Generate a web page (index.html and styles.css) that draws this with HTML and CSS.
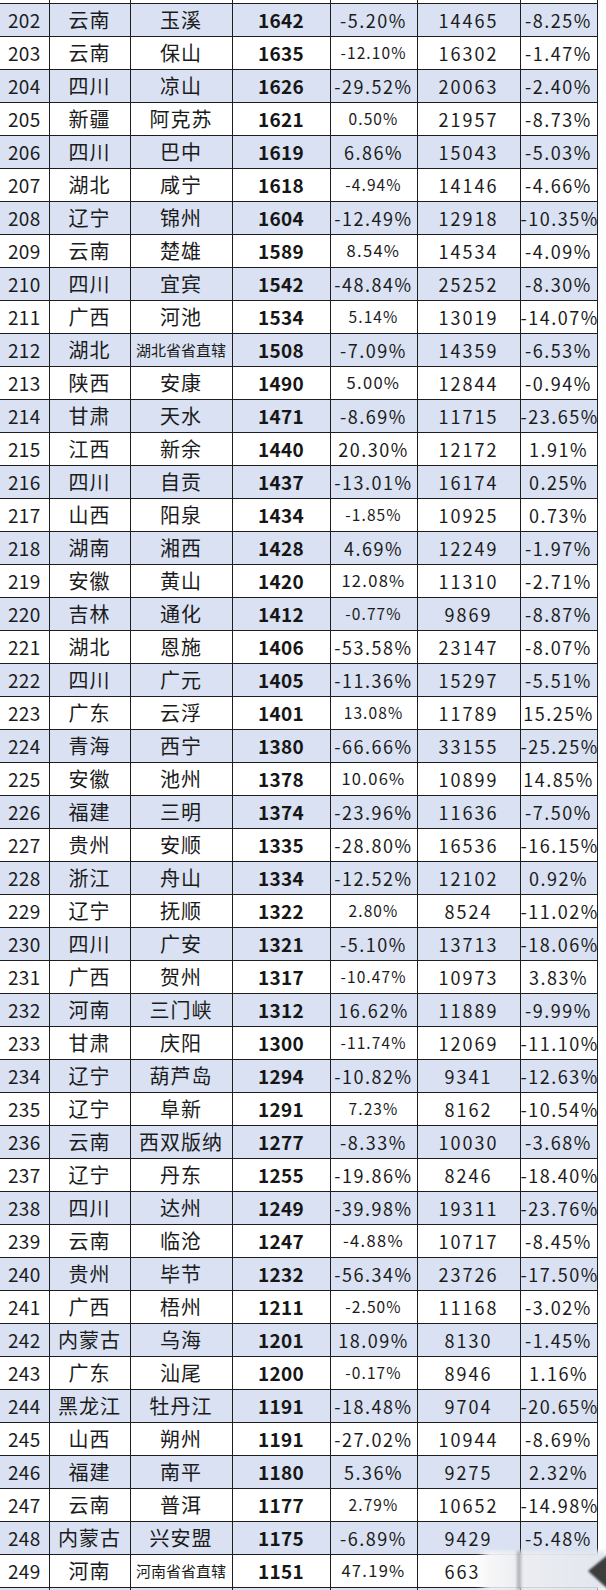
FILE: index.html
```html
<!DOCTYPE html>
<html lang="zh-CN">
<head>
<meta charset="utf-8">
<title>城市排名 202-249</title>
<link rel="stylesheet" href="styles.css">
</head>
<body>
<div class="page">
<table class="sheet">
<colgroup><col class="w1"><col class="w2"><col class="w3"><col class="w4"><col class="w5"><col class="w6"><col class="w7"></colgroup>
<tbody>
<tr class="edge-top"><td></td><td></td><td></td><td></td><td></td><td></td><td></td></tr>
<tr class="s"><td class="c1">202</td><td class="c2">云南</td><td class="c3">玉溪</td><td class="c4">1642</td><td class="c5">-5.20%</td><td class="c6">14465</td><td class="c7">-8.25%</td></tr>
<tr><td class="c1">203</td><td class="c2">云南</td><td class="c3">保山</td><td class="c4">1635</td><td class="c5 sm">-12.10%</td><td class="c6">16302</td><td class="c7">-1.47%</td></tr>
<tr class="s"><td class="c1">204</td><td class="c2">四川</td><td class="c3">凉山</td><td class="c4">1626</td><td class="c5">-29.52%</td><td class="c6">20063</td><td class="c7">-2.40%</td></tr>
<tr><td class="c1">205</td><td class="c2">新疆</td><td class="c3">阿克苏</td><td class="c4">1621</td><td class="c5 sm">0.50%</td><td class="c6">21957</td><td class="c7">-8.73%</td></tr>
<tr class="s"><td class="c1">206</td><td class="c2">四川</td><td class="c3">巴中</td><td class="c4">1619</td><td class="c5">6.86%</td><td class="c6">15043</td><td class="c7">-5.03%</td></tr>
<tr><td class="c1">207</td><td class="c2">湖北</td><td class="c3">咸宁</td><td class="c4">1618</td><td class="c5 sm">-4.94%</td><td class="c6">14146</td><td class="c7">-4.66%</td></tr>
<tr class="s"><td class="c1">208</td><td class="c2">辽宁</td><td class="c3">锦州</td><td class="c4">1604</td><td class="c5">-12.49%</td><td class="c6">12918</td><td class="c7">-10.35%</td></tr>
<tr><td class="c1">209</td><td class="c2">云南</td><td class="c3">楚雄</td><td class="c4">1589</td><td class="c5 md">8.54%</td><td class="c6">14534</td><td class="c7">-4.09%</td></tr>
<tr class="s"><td class="c1">210</td><td class="c2">四川</td><td class="c3">宜宾</td><td class="c4">1542</td><td class="c5">-48.84%</td><td class="c6">25252</td><td class="c7">-8.30%</td></tr>
<tr><td class="c1">211</td><td class="c2">广西</td><td class="c3">河池</td><td class="c4">1534</td><td class="c5 sm">5.14%</td><td class="c6">13019</td><td class="c7">-14.07%</td></tr>
<tr class="s"><td class="c1">212</td><td class="c2">湖北</td><td class="c3 tiny">湖北省省直辖</td><td class="c4">1508</td><td class="c5">-7.09%</td><td class="c6">14359</td><td class="c7">-6.53%</td></tr>
<tr><td class="c1">213</td><td class="c2">陕西</td><td class="c3">安康</td><td class="c4">1490</td><td class="c5 md">5.00%</td><td class="c6">12844</td><td class="c7">-0.94%</td></tr>
<tr class="s"><td class="c1">214</td><td class="c2">甘肃</td><td class="c3">天水</td><td class="c4">1471</td><td class="c5">-8.69%</td><td class="c6">11715</td><td class="c7">-23.65%</td></tr>
<tr><td class="c1">215</td><td class="c2">江西</td><td class="c3">新余</td><td class="c4">1440</td><td class="c5">20.30%</td><td class="c6">12172</td><td class="c7">1.91%</td></tr>
<tr class="s"><td class="c1">216</td><td class="c2">四川</td><td class="c3">自贡</td><td class="c4">1437</td><td class="c5">-13.01%</td><td class="c6">16174</td><td class="c7">0.25%</td></tr>
<tr><td class="c1">217</td><td class="c2">山西</td><td class="c3">阳泉</td><td class="c4">1434</td><td class="c5 sm">-1.85%</td><td class="c6">10925</td><td class="c7">0.73%</td></tr>
<tr class="s"><td class="c1">218</td><td class="c2">湖南</td><td class="c3">湘西</td><td class="c4">1428</td><td class="c5">4.69%</td><td class="c6">12249</td><td class="c7">-1.97%</td></tr>
<tr><td class="c1">219</td><td class="c2">安徽</td><td class="c3">黄山</td><td class="c4">1420</td><td class="c5 md">12.08%</td><td class="c6">11310</td><td class="c7">-2.71%</td></tr>
<tr class="s"><td class="c1">220</td><td class="c2">吉林</td><td class="c3">通化</td><td class="c4">1412</td><td class="c5 sm">-0.77%</td><td class="c6">9869</td><td class="c7">-8.87%</td></tr>
<tr><td class="c1">221</td><td class="c2">湖北</td><td class="c3">恩施</td><td class="c4">1406</td><td class="c5">-53.58%</td><td class="c6">23147</td><td class="c7">-8.07%</td></tr>
<tr class="s"><td class="c1">222</td><td class="c2">四川</td><td class="c3">广元</td><td class="c4">1405</td><td class="c5">-11.36%</td><td class="c6">15297</td><td class="c7">-5.51%</td></tr>
<tr><td class="c1">223</td><td class="c2">广东</td><td class="c3">云浮</td><td class="c4">1401</td><td class="c5 sm">13.08%</td><td class="c6">11789</td><td class="c7">15.25%</td></tr>
<tr class="s"><td class="c1">224</td><td class="c2">青海</td><td class="c3">西宁</td><td class="c4">1380</td><td class="c5">-66.66%</td><td class="c6">33155</td><td class="c7">-25.25%</td></tr>
<tr><td class="c1">225</td><td class="c2">安徽</td><td class="c3">池州</td><td class="c4">1378</td><td class="c5 md">10.06%</td><td class="c6">10899</td><td class="c7">14.85%</td></tr>
<tr class="s"><td class="c1">226</td><td class="c2">福建</td><td class="c3">三明</td><td class="c4">1374</td><td class="c5">-23.96%</td><td class="c6">11636</td><td class="c7">-7.50%</td></tr>
<tr><td class="c1">227</td><td class="c2">贵州</td><td class="c3">安顺</td><td class="c4">1335</td><td class="c5">-28.80%</td><td class="c6">16536</td><td class="c7">-16.15%</td></tr>
<tr class="s"><td class="c1">228</td><td class="c2">浙江</td><td class="c3">舟山</td><td class="c4">1334</td><td class="c5">-12.52%</td><td class="c6">12102</td><td class="c7">0.92%</td></tr>
<tr><td class="c1">229</td><td class="c2">辽宁</td><td class="c3">抚顺</td><td class="c4">1322</td><td class="c5 sm">2.80%</td><td class="c6">8524</td><td class="c7">-11.02%</td></tr>
<tr class="s"><td class="c1">230</td><td class="c2">四川</td><td class="c3">广安</td><td class="c4">1321</td><td class="c5">-5.10%</td><td class="c6">13713</td><td class="c7">-18.06%</td></tr>
<tr><td class="c1">231</td><td class="c2">广西</td><td class="c3">贺州</td><td class="c4">1317</td><td class="c5 sm">-10.47%</td><td class="c6">10973</td><td class="c7">3.83%</td></tr>
<tr class="s"><td class="c1">232</td><td class="c2">河南</td><td class="c3">三门峡</td><td class="c4">1312</td><td class="c5">16.62%</td><td class="c6">11889</td><td class="c7">-9.99%</td></tr>
<tr><td class="c1">233</td><td class="c2">甘肃</td><td class="c3">庆阳</td><td class="c4">1300</td><td class="c5 sm">-11.74%</td><td class="c6">12069</td><td class="c7">-11.10%</td></tr>
<tr class="s"><td class="c1">234</td><td class="c2">辽宁</td><td class="c3">葫芦岛</td><td class="c4">1294</td><td class="c5">-10.82%</td><td class="c6">9341</td><td class="c7">-12.63%</td></tr>
<tr><td class="c1">235</td><td class="c2">辽宁</td><td class="c3">阜新</td><td class="c4">1291</td><td class="c5 sm">7.23%</td><td class="c6">8162</td><td class="c7">-10.54%</td></tr>
<tr class="s"><td class="c1">236</td><td class="c2">云南</td><td class="c3">西双版纳</td><td class="c4">1277</td><td class="c5">-8.33%</td><td class="c6">10030</td><td class="c7">-3.68%</td></tr>
<tr><td class="c1">237</td><td class="c2">辽宁</td><td class="c3">丹东</td><td class="c4">1255</td><td class="c5">-19.86%</td><td class="c6">8246</td><td class="c7">-18.40%</td></tr>
<tr class="s"><td class="c1">238</td><td class="c2">四川</td><td class="c3">达州</td><td class="c4">1249</td><td class="c5">-39.98%</td><td class="c6">19311</td><td class="c7">-23.76%</td></tr>
<tr><td class="c1">239</td><td class="c2">云南</td><td class="c3">临沧</td><td class="c4">1247</td><td class="c5 md">-4.88%</td><td class="c6">10717</td><td class="c7">-8.45%</td></tr>
<tr class="s"><td class="c1">240</td><td class="c2">贵州</td><td class="c3">毕节</td><td class="c4">1232</td><td class="c5">-56.34%</td><td class="c6">23726</td><td class="c7">-17.50%</td></tr>
<tr><td class="c1">241</td><td class="c2">广西</td><td class="c3">梧州</td><td class="c4">1211</td><td class="c5 sm">-2.50%</td><td class="c6">11168</td><td class="c7">-3.02%</td></tr>
<tr class="s"><td class="c1">242</td><td class="c2">内蒙古</td><td class="c3">乌海</td><td class="c4">1201</td><td class="c5">18.09%</td><td class="c6">8130</td><td class="c7">-1.45%</td></tr>
<tr><td class="c1">243</td><td class="c2">广东</td><td class="c3">汕尾</td><td class="c4">1200</td><td class="c5 sm">-0.17%</td><td class="c6">8946</td><td class="c7">1.16%</td></tr>
<tr class="s"><td class="c1">244</td><td class="c2">黑龙江</td><td class="c3">牡丹江</td><td class="c4">1191</td><td class="c5">-18.48%</td><td class="c6">9704</td><td class="c7">-20.65%</td></tr>
<tr><td class="c1">245</td><td class="c2">山西</td><td class="c3">朔州</td><td class="c4">1191</td><td class="c5">-27.02%</td><td class="c6">10944</td><td class="c7">-8.69%</td></tr>
<tr class="s"><td class="c1">246</td><td class="c2">福建</td><td class="c3">南平</td><td class="c4">1180</td><td class="c5">5.36%</td><td class="c6">9275</td><td class="c7">2.32%</td></tr>
<tr><td class="c1">247</td><td class="c2">云南</td><td class="c3">普洱</td><td class="c4">1177</td><td class="c5 sm">2.79%</td><td class="c6">10652</td><td class="c7">-14.98%</td></tr>
<tr class="s"><td class="c1">248</td><td class="c2">内蒙古</td><td class="c3">兴安盟</td><td class="c4">1175</td><td class="c5">-6.89%</td><td class="c6">9429</td><td class="c7">-5.48%</td></tr>
<tr><td class="c1">249</td><td class="c2">河南</td><td class="c3 tiny">河南省省直辖</td><td class="c4">1151</td><td class="c5 md">47.19%</td><td class="c6 cut">663</td><td class="c7"></td></tr>
<tr class="s edge-bottom"><td></td><td></td><td></td><td></td><td></td><td></td><td></td></tr>
</tbody>
</table>
<div class="mark" aria-hidden="true">
  <div class="mark-fog"></div>
  <div class="mark-line"></div>
  <svg class="mark-logo" width="24" height="40" viewBox="0 0 24 40"><polygon points="24,2 24,40 2,20" fill="#3d3d3d"/></svg>
</div>
</div>
</body>
</html>
```
FILE: styles.css
```css
html, body {
  margin: 0;
  padding: 0;
  background: #ffffff;
}

body {
  width: 606px;
  height: 1590px;
  overflow: hidden;
}

.page {
  position: relative;
  width: 606px;
  height: 1590px;
  overflow: hidden;
  font-family: "Noto Sans CJK SC", "Noto Sans", sans-serif;
  color: #1b1b1b;
}

.sheet {
  border-collapse: collapse;
  table-layout: fixed;
  width: 597px;
}

.w1 { width: 49px; }
.w2 { width: 81px; }
.w3 { width: 102px; }
.w4 { width: 98px; }
.w5 { width: 87px; }
.w6 { width: 103px; }
.w7 { width: 77px; }

.sheet tr {
  height: 33px;
}

.sheet td {
  border: 1px solid #1e1e1e;
  padding: 0;
  text-align: center;
  vertical-align: middle;
  white-space: nowrap;
  overflow: visible;
  line-height: 1;
  background: #ffffff;
}

.sheet td:first-child {
  border-left: none;
}

.sheet tr.s td {
  background: #d9e1f2;
}

.sheet tr.edge-top {
  height: 3px;
}

.sheet tr.edge-top td {
  border-top: none;
}

.sheet tr.edge-bottom {
  height: 4px;
}

.sheet tr.edge-bottom td {
  border-bottom: none;
}

.c1 {
  font-size: 19px;
  letter-spacing: 0.3px;
}

.c2, .c3 {
  font-size: 20px;
  letter-spacing: 1px;
}

.c3.tiny {
  font-size: 15px;
  letter-spacing: 0;
}

.c4 {
  font-size: 19px;
  font-weight: 700;
  letter-spacing: 0.3px;
  color: #161616;
}

.c5 {
  font-size: 18px;
  letter-spacing: 1.5px;
}

.c5.md {
  font-size: 16.5px;
  letter-spacing: 1.3px;
}

.c5.sm {
  font-size: 15.5px;
  letter-spacing: 1.1px;
}

.c6 {
  font-size: 18px;
  letter-spacing: 2px;
}

.c6.cut {
  padding-right: 12px;
}

.c7 {
  font-size: 18px;
  letter-spacing: 1.5px;
  padding-left: 4px;
}

.mark {
  position: absolute;
  left: 477px;
  top: 1551px;
  width: 129px;
  height: 39px;
}

.mark-fog {
  position: absolute;
  inset: 0;
  background: linear-gradient(to right, rgba(250, 250, 250, 0) 0px, rgba(246, 246, 246, 0.97) 12px, #ebedf1 45px, #e2e6ee 100%);
  filter: blur(2px);
}

.mark-line {
  position: absolute;
  left: 40px;
  top: 0;
  width: 4px;
  height: 39px;
  background: rgba(120, 124, 132, 0.55);
  filter: blur(1.5px);
}

.mark-logo {
  position: absolute;
  right: -4px;
  top: 0;
  filter: blur(1.2px);
}
```
